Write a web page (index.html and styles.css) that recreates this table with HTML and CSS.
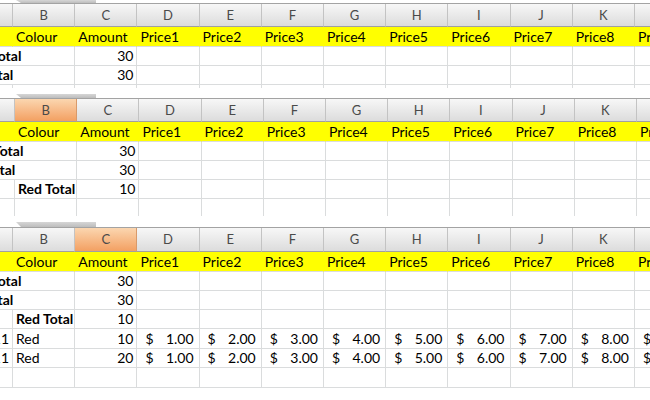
FILE: index.html
```html
<!DOCTYPE html>
<html lang="en">
<head>
    <meta charset="UTF-8">
    <title>Subtotal sheets</title>
    <link rel="stylesheet" href="styles.css">
</head>
<body>
    <div class="sheet sheet-one">
        <div class="split"><div class="thumb"></div></div>
        <div class="view"><div class="grid" id="sheet1"></div></div>
    </div>

    <div class="sheet sheet-two">
        <div class="split"><div class="thumb"></div></div>
        <div class="view"><div class="grid" id="sheet2"></div></div>
    </div>

    <div class="sheet sheet-three">
        <div class="split"><div class="thumb"></div></div>
        <div class="view"><div class="grid" id="sheet3"></div></div>
    </div>

    <script>
        const COLS = ['A', 'B', 'C', 'D', 'E', 'F', 'G', 'H', 'I', 'J', 'K', 'L'];
        const LABELS = ['Date', 'Colour', 'Amount', 'Price1', 'Price2', 'Price3', 'Price4',
                        'Price5', 'Price6', 'Price7', 'Price8', 'Price9'];

        function cell(text, cls) {
            const div = document.createElement('div');
            div.className = 'cell' + (cls ? ' ' + cls : '');
            div.textContent = text;
            return div;
        }

        function moneyCell(value) {
            const div = cell('', 'money');
            const sign = document.createElement('span');
            sign.textContent = '$';
            const amount = document.createElement('span');
            amount.textContent = value.toFixed(2);
            div.append(sign, amount);
            return div;
        }

        function blanks(n) {
            return Array.from({ length: n }, () => cell(''));
        }

        function headerRow(selected) {
            return COLS.map(c => cell(c, 'head' + (c === selected ? ' selected' : '')));
        }

        function labelRow() {
            return LABELS.map(l => cell(l, 'label'));
        }

        function totalRow(text, amount) {
            return [cell(text, 'bold wide'), cell(amount, 'num'), ...blanks(9)];
        }

        function subtotalRow(text, amount) {
            return [cell(''), cell(text, 'bold'), cell(amount, 'num'), ...blanks(9)];
        }

        function dataRow(date, colour, amount) {
            const prices = [1, 2, 3, 4, 5, 6, 7, 8, 9].map(p => moneyCell(p));
            return [cell(date, 'num'), cell(colour), cell(amount, 'num'), ...prices];
        }

        const sheets = [
            { id: 'sheet1', selected: null, rows: [
                totalRow('10/11/2011 Total', '30'),
                totalRow('1/11/2011 Total', '30'),
                blanks(12)
            ] },
            { id: 'sheet2', selected: 'B', rows: [
                totalRow('10/11/2011 Total', '30'),
                totalRow('1/11/2011 Total', '30'),
                subtotalRow('Red Total', '10'),
                blanks(12)
            ] },
            { id: 'sheet3', selected: 'C', rows: [
                totalRow('10/11/2011 Total', '30'),
                totalRow('1/11/2011 Total', '30'),
                subtotalRow('Red Total', '10'),
                dataRow('1/11/2011', 'Red', '10'),
                dataRow('1/11/2011', 'Red', '20'),
                blanks(12)
            ] }
        ];

        sheets.forEach(sheet => {
            const grid = document.getElementById(sheet.id);
            grid.append(...headerRow(sheet.selected), ...labelRow());
            sheet.rows.forEach(row => grid.append(...row));
        });
    </script>
</body>
</html>
```

FILE: styles.css
```css
body {
    margin: 0;
    background: #fff;
    font-family: Lato, "Open Sans", sans-serif;
    overflow: hidden;
}
.sheet {
    overflow: hidden;
    margin-bottom: 6px;
}
.split {
    height: 3px;
}
.thumb {
    width: 80px;
    height: 100%;
    margin-left: 16px;
    background: linear-gradient(#d6d6d6, #bdbdbd);
    clip-path: polygon(0 0, 100% 0, 100% 100%, 5px 100%);
}
.view {
    box-sizing: border-box;
    overflow: hidden;
    border-top: 1px solid #a3a3a3;
}
.sheet-one .view {
    height: 85px;
}
.sheet-two .split {
    height: 4px;
}
.sheet-two .view {
    height: 118px;
}
.sheet-three .split {
    height: 5px;
}
.sheet-three .view {
    height: 161px;
}
.grid {
    --col-a: 106px;
    display: grid;
    grid-template-columns: var(--col-a) repeat(11, 62.2px);
    grid-template-rows: 23px 20px;
    grid-auto-rows: 19px;
    width: max-content;
    margin-left: calc(13px - var(--col-a));
}
.sheet-two .grid {
    margin-left: calc(15px - var(--col-a));
}
.sheet-three .grid {
    grid-template-rows: 24px 20px 19px 19px 19px 20px 19px 20px;
}
.cell {
    box-sizing: border-box;
    display: flex;
    align-items: flex-end;
    padding: 0 3px 1px;
    border-right: 1px solid #dadcdd;
    border-bottom: 1px solid #dadcdd;
    font-size: 14px;
    line-height: 17px;
    white-space: nowrap;
    overflow: hidden;
    color: #000;
}
.head {
    justify-content: center;
    align-items: center;
    padding: 0;
    background: linear-gradient(#f7f7f7, #dcdcdc);
    border-right-color: #c3c3c3;
    border-bottom-color: #a0a0a0;
    color: #4a4a4a;
    font-size: 13px;
}
.head.selected {
    background: linear-gradient(#fbd6b0, #f3a062);
    border-right-color: #d99a6a;
}
.label {
    background: #ffff00;
    border-right-color: #ffff00;
}
.num {
    justify-content: flex-end;
}
.bold {
    font-weight: 700;
}
.wide {
    grid-column: span 2;
}
.money {
    justify-content: space-between;
    padding: 0 5px 1px 8px;
}
```
